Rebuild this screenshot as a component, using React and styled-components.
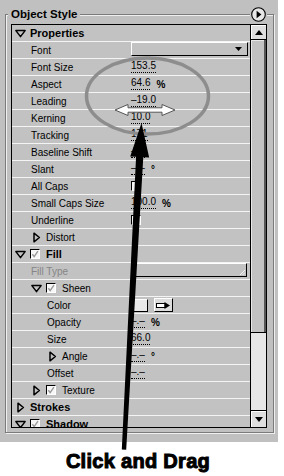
import React from "react";
import styled, { createGlobalStyle } from "styled-components";

const GlobalStyle = createGlobalStyle`
  body {
    margin: 0;
    background: #ffffff;
    font-family: "Liberation Sans", Arial, sans-serif;
  }
`;

const rows = [
  { label: "Properties", depth: 0, header: true, open: true },
  { label: "Font", depth: 1, control: "select" },
  { label: "Font Size", depth: 1, value: "153.5" },
  { label: "Aspect", depth: 1, value: "64.6", unit: "%" },
  { label: "Leading", depth: 1, value: "\u201319.0" },
  { label: "Kerning", depth: 1, value: "10.0" },
  { label: "Tracking", depth: 1, value: "171" },
  { label: "Baseline Shift", depth: 1, value: "\u2013.\u2013" },
  { label: "Slant", depth: 1, value: "\u2013.\u2013", unit: "°" },
  { label: "All Caps", depth: 1, control: "check" },
  { label: "Small Caps Size", depth: 1, value: "100.0", unit: "%" },
  { label: "Underline", depth: 1, control: "check" },
  { label: "Distort", depth: 1, open: false },
  { label: "Fill", depth: 0, header: true, open: true, checked: true },
  { label: "Fill Type", depth: 1, dim: true, control: "button" },
  { label: "Sheen", depth: 1, open: true, checked: true },
  { label: "Color", depth: 2, control: "color" },
  { label: "Opacity", depth: 2, value: "\u2013.\u2013", unit: "%" },
  { label: "Size", depth: 2, value: "66.0" },
  { label: "Angle", depth: 2, open: false, value: "\u2013.\u2013", unit: "°" },
  { label: "Offset", depth: 2, value: "\u2013.\u2013" },
  { label: "Texture", depth: 1, open: false, checked: true },
  { label: "Strokes", depth: 0, header: true, open: false },
  { label: "Shadow", depth: 0, header: true, open: true, checked: true },
];

const Disclosure = ({ open }) => (
  <Twisty viewBox="0 0 11 11">
    {open ? (
      <polygon points="0.9,2.6 10.1,2.6 5.5,8.6" fill="none" stroke="#000" strokeWidth="1.5" strokeLinejoin="round" />
    ) : (
      <polygon points="3,1.2 8.4,5.5 3,9.8" fill="none" stroke="#000" strokeWidth="1.5" strokeLinejoin="round" />
    )}
  </Twisty>
);

const CheckBox = ({ checked }) => (
  <Check>
    {checked && (
      <svg width="9" height="9" viewBox="0 0 9 9">
        <path d="M1.5 4.2 L3.6 6.8 L7.8 0.8" fill="none" stroke="#9a9a9a" strokeWidth="1.6" />
      </svg>
    )}
  </Check>
);

const renderValue = (row) => {
  switch (row.control) {
    case "select":
      return (
        <Select>
          <svg width="7" height="4" viewBox="0 0 7 4">
            <polygon points="0,0 7,0 3.5,4" fill="#000" />
          </svg>
        </Select>
      );
    case "check":
      return <CheckBox />;
    case "button":
      return (
        <WideButton>
          <svg width="6" height="6" viewBox="0 0 6 6">
            <path d="M1 6 L6 1 M3.5 6 L6 3.5" stroke="#f4f4f4" strokeWidth="1" />
          </svg>
        </WideButton>
      );
    case "color":
      return (
        <>
          <Swatch />
          <PickButton>
            <svg width="15" height="7" viewBox="0 0 15 7">
              <rect x="0.5" y="1.5" width="8.5" height="4" fill="#fff" stroke="#000" />
              <polygon points="8.5,0 14,3.5 8.5,7" fill="#000" />
            </svg>
          </PickButton>
        </>
      );
    default:
      if (!row.value) return null;
      return (
        <>
          <Value>{row.value}</Value>
          {row.unit && <Unit>{row.unit}</Unit>}
        </>
      );
  }
};

const App = () => {
  return (
    <>
      <GlobalStyle />
      <Page>
        <Panel>
          <GroupBox>
            <GroupHeader>
              <Title>Object Style</Title>
              <MenuButton>
                <svg width="15" height="15" viewBox="0 0 15 15">
                  <circle cx="7.5" cy="7.5" r="6.8" fill="#e6e6e6" stroke="#000" strokeWidth="1.1" />
                  <polygon points="5.6,3.8 10.4,7.5 5.6,11.2" fill="#000" />
                </svg>
              </MenuButton>
            </GroupHeader>
            <ListBox>
              <Rows>
                {rows.map((row) => (
                  <Row key={row.label}>
                    <Label $depth={row.depth} $header={row.header} $dim={row.dim}>
                      {row.open !== undefined && <Disclosure open={row.open} />}
                      {row.checked && <CheckBox checked />}
                      {row.label}
                    </Label>
                    <ValueCell>{renderValue(row)}</ValueCell>
                  </Row>
                ))}
              </Rows>
              <Scrollbar>
                <ArrowButton $up>
                  <svg width="8" height="5" viewBox="0 0 8 5">
                    <polygon points="0,5 8,5 4,0" fill="#000" />
                  </svg>
                </ArrowButton>
                <Thumb />
                <Track />
                <ArrowButton>
                  <svg width="8" height="5" viewBox="0 0 8 5">
                    <polygon points="0,0 8,0 4,5" fill="#000" />
                  </svg>
                </ArrowButton>
              </Scrollbar>
            </ListBox>
          </GroupBox>
        </Panel>
        <Caption>Click and Drag</Caption>

        <Overlay width="284" height="476" viewBox="0 0 284 476">
          <ellipse cx="147.5" cy="96" rx="61" ry="38" fill="none" stroke="#8d8d8d" strokeWidth="3.5" />
          <polygon
            points="115,110 128,104.5 128,107.8 162,107.8 162,104.5 175,110 162,115.5 162,112.2 128,112.2 128,115.5"
            fill="#fff"
            stroke="#555"
            strokeWidth="1"
            strokeLinejoin="round"
          />
          <g transform="translate(141.5 123) rotate(3.07)">
            <polygon points="0,0 9.5,34 3.6,34 2.2,327 -2.2,327 -3.6,34 -9.5,34" fill="#000" />
          </g>
        </Overlay>
      </Page>
    </>
  );
};

export default App;

const Page = styled.div`
  position: relative;
  width: 284px;
  height: 476px;
  overflow: hidden;
  background: #ffffff;
`;

const Panel = styled.div`
  width: 278px;
  height: 442px;
  box-sizing: border-box;
  padding: 14px 0 0 5px;
  background: #c0c0c0;
`;

const GroupBox = styled.div`
  width: 269px;
  height: 419px;
  box-sizing: border-box;
  border: 1px solid #7b7b7b;
  box-shadow: inset 1px 1px 0 #efefef, 1px 1px 0 #efefef;
`;

const GroupHeader = styled.div`
  display: flex;
  align-items: center;
  justify-content: space-between;
  height: 15px;
  margin: -8px 6px 0 2px;
`;

const Title = styled.span`
  padding: 0 3px;
  background: #c0c0c0;
  color: #000;
  font-size: 11.5px;
  font-weight: 700;
  line-height: 15px;
`;

const MenuButton = styled.span`
  display: flex;
  padding: 0 1px;
  background: #c0c0c0;
`;

const ListBox = styled.div`
  display: flex;
  width: 256px;
  height: 404px;
  box-sizing: border-box;
  margin: 2px 0 0 5px;
  border: 1px solid #000;
  background: #c2c2c2;
`;

const Rows = styled.div`
  flex: 1;
  overflow: hidden;
`;

const Row = styled.div`
  display: grid;
  grid-template-columns: 119px 1fr;
  height: 16px;
  border-bottom: 1px solid #f4f4f4;
`;

const Label = styled.div`
  display: flex;
  align-items: center;
  padding-left: ${(p) => 3 + p.$depth * 16}px;
  color: ${(p) => (p.$dim ? "#858585" : "#000")};
  font-size: ${(p) => (p.$header ? "11px" : "10px")};
  font-weight: ${(p) => (p.$header ? 700 : 400)};
  white-space: nowrap;
`;

const Twisty = styled.svg`
  flex: none;
  width: 11px;
  height: 11px;
  margin-right: 4px;
`;

const Check = styled.span`
  flex: none;
  display: flex;
  align-items: center;
  justify-content: center;
  width: 10px;
  height: 10px;
  box-sizing: border-box;
  margin-right: 6px;
  border: 1px solid;
  border-color: #000 #fff #fff #000;
  background: #f7f7f7;
`;

const ValueCell = styled.div`
  display: flex;
  align-items: center;
  font-size: 10px;
  color: #000;
`;

const Value = styled.span`
  padding-bottom: 1px;
  border-bottom: 1px dotted #000;
  line-height: 10px;
`;

const Unit = styled.span`
  margin-left: 6px;
  font-weight: 700;
`;

const Select = styled.div`
  align-self: start;
  display: flex;
  align-items: center;
  justify-content: flex-end;
  width: 117px;
  height: 14px;
  box-sizing: border-box;
  padding-right: 5px;
  border: 1px solid;
  border-color: #fff #000 #000 #fff;
`;

const WideButton = styled.div`
  align-self: start;
  display: flex;
  align-items: flex-end;
  justify-content: flex-end;
  width: 116px;
  height: 14px;
  box-sizing: border-box;
  padding: 0 1px 1px 0;
  border: 1px solid;
  border-color: #fff #000 #000 #fff;
`;

const Swatch = styled.span`
  width: 17px;
  height: 13px;
  box-sizing: border-box;
  border: 1px solid;
  border-color: #fff #000 #000 #fff;
  background: #e8e8e8;
`;

const PickButton = styled.span`
  display: flex;
  align-items: center;
  justify-content: center;
  width: 19px;
  height: 14px;
  box-sizing: border-box;
  margin-left: 6px;
  border: 1px solid;
  border-color: #fff #000 #000 #fff;
  background: #dcdcdc;
`;

const Scrollbar = styled.div`
  display: flex;
  flex-direction: column;
  width: 15px;
  border-left: 1px solid #000;
`;

const ArrowButton = styled.div`
  display: flex;
  align-items: center;
  justify-content: center;
  height: ${(p) => (p.$up ? "14px" : "16px")};
  border-bottom: ${(p) => (p.$up ? "1px solid #000" : "none")};
  border-top: ${(p) => (p.$up ? "none" : "1px solid #000")};
  background: #dedede;
  box-shadow: inset 1px 1px 0 #fff;
`;

const Thumb = styled.div`
  height: 292px;
  border-bottom: 1px solid #000;
  background: #c2c2c2;
  box-shadow: inset -2px 0 0 #555, inset 1px 1px 0 #e8e8e8;
`;

const Track = styled.div`
  flex: 1;
  background: #e6e6e6;
`;

const Caption = styled.div`
  margin-top: 7px;
  padding-right: 8px;
  color: #000;
  font-size: 20px;
  font-weight: 700;
  line-height: 24px;
  letter-spacing: 0.3px;
  text-align: center;
  -webkit-text-stroke: 1px #000;
`;

const Overlay = styled.svg`
  position: absolute;
  top: 0;
  left: 0;
  pointer-events: none;
`;
